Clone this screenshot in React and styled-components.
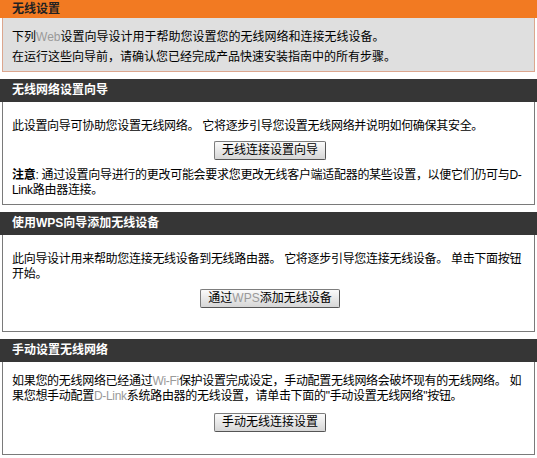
import React from 'react'
import styled, { createGlobalStyle } from 'styled-components'

const GlobalStyle = createGlobalStyle`
  html, body {
    margin: 0;
    padding: 0;
    background: #ffffff;
  }
  body {
    font-family: "Liberation Sans", "Noto Sans CJK SC", sans-serif;
    font-size: 12px;
    color: #000;
  }
`

function Faded({ children }) {
  return <FadedText>{children}</FadedText>
}

const sections = [
  {
    title: '无线网络设置向导',
    button: '无线连接设置向导',
    pad: '17px 6px 6px 9px',
    gap: 7,
    text: <>此设置向导可协助您设置无线网络。 它将逐步引导您设置无线网络并说明如何确保其安全。</>,
    note: (
      <>
        <b>注意</b>: 通过设置向导进行的更改可能会要求您更改无线客户端适配器的某些设置，以便它们仍可与D-
        <br />
        Link路由器连接。
      </>
    ),
  },
  {
    title: '使用WPS向导添加无线设备',
    button: <>通过<Faded>WPS</Faded>添加无线设备</>,
    pad: '17px 6px 15px 9px',
    gap: 7,
    text: (
      <>
        此向导设计用来帮助您连接无线设备到无线路由器。 它将逐步引导您连接无线设备。 单击下面按钮
        <br />
        开始。
      </>
    ),
  },
  {
    title: '手动设置无线网络',
    button: '手动无线连接设置',
    pad: '12px 6px 14px 9px',
    gap: 9,
    text: (
      <>
        如果您的无线网络已经通过<Faded>Wi-Fi</Faded>保护设置完成设定，手动配置无线网络会破坏现有的无线网络。 如
        <br />
        果您想手动配置<Faded>D-Link</Faded>系统路由器的无线设置，请单击下面的"手动设置无线网络"按钮。
      </>
    ),
  },
]

export default function App() {
  return (
    <Page>
      <GlobalStyle />
      <TopTitle>无线设置</TopTitle>
      <Intro>
        <IntroLine>下列<Faded>Web</Faded>设置向导设计用于帮助您设置您的无线网络和连接无线设备。</IntroLine>
        <IntroLine>在运行这些向导前，请确认您已经完成产品快速安装指南中的所有步骤。</IntroLine>
      </Intro>

      {sections.map((s, i) => (
        <Section key={i}>
          <SectionTitle>{s.title}</SectionTitle>
          <SectionBody $pad={s.pad}>
            <Para>{s.text}</Para>
            <ButtonRow $gap={s.gap}>
              <Button>{s.button}</Button>
            </ButtonRow>
            {s.note && <Para>{s.note}</Para>}
          </SectionBody>
        </Section>
      ))}
    </Page>
  )
}

const Page = styled.div`
  width: 537px;
  display: flex;
  flex-direction: column;
`

const TopTitle = styled.div`
  height: 18px;
  line-height: 18px;
  background: #f27a22;
  color: #222;
  font-weight: bold;
  padding-left: 12px;
`

const Intro = styled.div`
  margin: 0 2px;
  background: #dfdfdf;
  border: 1px solid #dca68e;
  border-top: none;
  padding: 9px 10px 4px 9px;
`

const IntroLine = styled.p`
  margin: 0;
  line-height: 20px;
`

const FadedText = styled.span`
  color: #9a9a9a;
`

const Section = styled.div`
  margin-top: 7px;
  display: flex;
  flex-direction: column;
`

const SectionTitle = styled.div`
  height: 23px;
  line-height: 23px;
  background: #363636;
  color: #fff;
  font-weight: bold;
  padding-left: 12px;
`

const SectionBody = styled.div`
  margin: 0 2px;
  border: 1px solid #7a7a7a;
  border-top: none;
  padding: ${(p) => p.$pad};
`

const Para = styled.p`
  margin: 0;
  line-height: 15px;
  white-space: nowrap;
  letter-spacing: -0.3px;
`

const ButtonRow = styled.div`
  display: flex;
  justify-content: center;
  margin: ${(p) => p.$gap}px 0 8px;
`

const Button = styled.button`
  font: inherit;
  font-size: 12px;
  height: 19px;
  line-height: 15px;
  padding: 0 7px;
  color: #000;
  background: linear-gradient(#fbfbfb, #d6d6d6);
  border: 1px solid #7d7d7d;
  border-right-color: #555;
  border-bottom-color: #555;
  border-radius: 2px;
  cursor: pointer;
`
